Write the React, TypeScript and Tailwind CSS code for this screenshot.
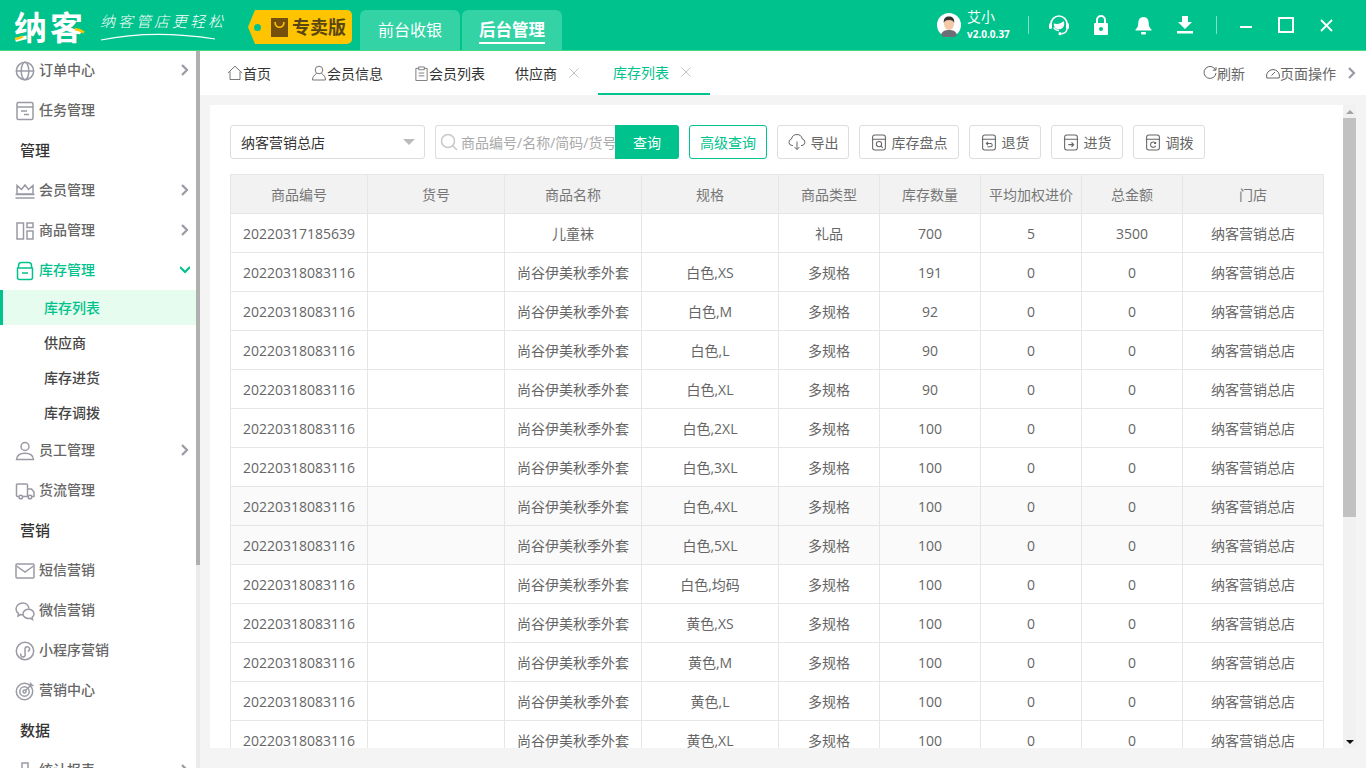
import type { ReactNode } from 'react';

type IconProps = { children: ReactNode; className?: string; size?: number; box?: number };

function Icon({ children, className = '', size = 20, box = 20 }: IconProps) {
  return (
    <svg
      width={size}
      height={size}
      viewBox={`0 0 ${box} ${box}`}
      fill="none"
      stroke="currentColor"
      strokeWidth={1.5}
      className={`shrink-0 ${className}`}
    >
      {children}
    </svg>
  );
}

function Chevron({ down }: { down?: boolean }) {
  return (
    <svg width="10" height="12" viewBox="0 0 10 12" fill="none" stroke="currentColor" strokeWidth={2.2} className="shrink-0">
      {down ? <path d="M0 3l5 5 5-5" /> : <path d="M2 1l5 5-5 5" />}
    </svg>
  );
}

const sideIcons: Record<string, ReactNode> = {
  globe: (
    <>
      <circle cx="10" cy="10" r="8.7" />
      <ellipse cx="10" cy="10" rx="3.8" ry="8.7" />
      <path d="M1.5 10h17" />
    </>
  ),
  task: (
    <>
      <rect x="2" y="1.5" width="16" height="17" rx="1.5" />
      <path d="M2 6h16M6 10h6M9 13.5h5" />
    </>
  ),
  crown: (
    <>
      <path d="M2 13V4.5l4.5 4 3.5-4.5 3.5 4.5 4.5-4V13z" />
      <path d="M0.5 13.5h19M0.5 17h19" />
    </>
  ),
  goods: (
    <>
      <rect x="2" y="2" width="6.5" height="16" />
      <rect x="12" y="2" width="6" height="4.5" />
      <rect x="12" y="10" width="6" height="8" />
    </>
  ),
  stock: (
    <>
      <path d="M3.5 7V4.5a3 3 0 0 1 3-3h7a3 3 0 0 1 3 3V7" />
      <path d="M2 7h16" />
      <path d="M2.5 7v9.5a2 2 0 0 0 2 2h11a2 2 0 0 0 2-2V7" />
      <path d="M7 12h6" />
    </>
  ),
  staff: (
    <>
      <circle cx="10" cy="5.5" r="4" />
      <path d="M1.5 18.5c.3-4.5 3.5-6.3 8.5-6.3s8.200 1.800 8.500 6.300z" />
    </>
  ),
  truck: (
    <>
      <path d="M4 15.500H2.500a1 1 0 0 1-1-1V4a1 1 0 0 1 1-1h9a1 1 0 0 1 1 1v11.500H8" />
      <path d="M12.500 8h4l2.500 3v4.500h-2M12.500 15.500H13" />
      <circle cx="5.800" cy="16" r="1.800" />
      <circle cx="15" cy="16" r="1.800" />
    </>
  ),
  mail: (
    <>
      <rect x="1" y="3" width="18" height="14" rx="1" />
      <path d="M1.500 5l8.500 6 8.500-6" />
    </>
  ),
  wechat: (
    <>
      <path d="M8 2C4 2 1 4.700 1 8c0 1.900 1 3.500 2.500 4.600L3 15l2.600-1.400c.8.200 1.500.300 2.300.300" />
      <path d="M13.500 8.300c-3 0-5.500 2-5.500 4.600s2.500 4.600 5.500 4.600c.7 0 1.300-.1 1.900-.3l2.100 1.300-.4-2.200c1.100-.9 1.900-2 1.900-3.400 0-2.600-2.500-4.600-5.500-4.600z" />
      <path d="M14 7.500C13.500 4.500 11 2 8 2" />
    </>
  ),
  mini: (
    <>
      <circle cx="10" cy="10" r="8.700" />
      <path d="M6 12.500a2.300 2.300 0 1 0 4 0V8a2.300 2.300 0 1 1 2.800 2.200" />
    </>
  ),
  target: (
    <>
      <circle cx="9.500" cy="10.500" r="8.200" />
      <circle cx="9.500" cy="10.500" r="4.700" />
      <circle cx="9.500" cy="10.500" r="1.500" />
      <path d="M10 10L17 3M15.500 1.500V4.500H18.500" />
    </>
  ),
  chart: (
    <>
      <path d="M2 18V9h5V2h6v16z" />
    </>
  ),
};

type MenuItem =
  | { kind: 'item'; label: string; icon: string; arrow?: boolean; open?: boolean }
  | { kind: 'section'; label: string }
  | { kind: 'sub'; label: string; active?: boolean };

const menu: MenuItem[] = [
  { kind: 'item', label: '订单中心', icon: 'globe', arrow: true },
  { kind: 'item', label: '任务管理', icon: 'task' },
  { kind: 'section', label: '管理' },
  { kind: 'item', label: '会员管理', icon: 'crown', arrow: true },
  { kind: 'item', label: '商品管理', icon: 'goods', arrow: true },
  { kind: 'item', label: '库存管理', icon: 'stock', open: true },
  { kind: 'sub', label: '库存列表', active: true },
  { kind: 'sub', label: '供应商' },
  { kind: 'sub', label: '库存进货' },
  { kind: 'sub', label: '库存调拨' },
  { kind: 'item', label: '员工管理', icon: 'staff', arrow: true },
  { kind: 'item', label: '货流管理', icon: 'truck' },
  { kind: 'section', label: '营销' },
  { kind: 'item', label: '短信营销', icon: 'mail' },
  { kind: 'item', label: '微信营销', icon: 'wechat' },
  { kind: 'item', label: '小程序营销', icon: 'mini' },
  { kind: 'item', label: '营销中心', icon: 'target' },
  { kind: 'section', label: '数据' },
  { kind: 'item', label: '统计报表', icon: 'chart', arrow: true },
];

function Sidebar() {
  return (
    <aside className="flex w-[200px] shrink-0 overflow-hidden">
      <nav className="-mt-px w-[196px] bg-white">
        {menu.map((m) => {
          if (m.kind === 'section') {
            return (
              <div key={m.label} className="flex h-[40px] items-center pl-[20px] text-[15px] font-medium text-[#333]">
                {m.label}
              </div>
            );
          }
          if (m.kind === 'sub') {
            return (
              <div
                key={m.label}
                className={
                  m.active
                    ? 'flex h-[35px] items-center border-l-[3px] border-[#00c28c] bg-[#e5fcee] pl-[41px] text-[14px] font-medium text-[#00c28c]'
                    : 'flex h-[35px] items-center pl-[44px] text-[14px] font-medium text-[#444]'
                }
              >
                {m.label}
              </div>
            );
          }
          return (
            <div key={m.label} className={`flex h-[40px] items-center pl-[15px] pr-[6px] ${m.open ? 'text-[#00c28c]' : 'text-[#9a9aa6]'}`}>
              <Icon className="mt-[2px]">{sideIcons[m.icon]}</Icon>
              <span className={`ml-[4px] flex-1 pb-[2px] text-[14px] font-medium ${m.open ? 'text-[#00c28c]' : 'text-[#666]'}`}>{m.label}</span>
              {m.arrow && <Chevron />}
              {m.open && <Chevron down />}
            </div>
          );
        })}
      </nav>
      <div className="w-[4px] bg-[#ebebeb]">
        <div className="h-[514px] bg-[#b0b0b0]" />
      </div>
    </aside>
  );
}

function Header() {
  return (
    <header className="flex h-[51px] shrink-0 items-stretch border-b border-[#45d97f] bg-[#00c28c] text-white">
      <div className="relative ml-[14px] flex w-[72px] items-center whitespace-nowrap pt-[4px] text-[33px] font-bold leading-none tracking-[3px]">
        纳客
        <svg width="72" height="30" viewBox="0 0 72 30" className="absolute left-0 top-[13px]" fill="none" stroke="#ffc400" strokeWidth={2.500}>
          <path d="M1 26c3 0 5-1 8-2.500M61 16c3 .5 6 1.500 9 3.500" />
        </svg>
      </div>
      <div className="ml-[14px] flex w-[128px] flex-col pt-[11px]">
        <span className="whitespace-nowrap text-[15px] font-light italic leading-[20px] tracking-[3px]">纳客管店更轻松</span>
        <svg width="116" height="8" viewBox="0 0 116 8" className="mt-[2px]" fill="none" stroke="#fff" strokeWidth={1.2}>
          <path d="M1 7C30 1 70-1 115 6" />
        </svg>
      </div>
      <div className="relative ml-[20px] mt-[10px] flex h-[34px] w-[104px] items-center rounded-r-[5px] bg-[#ffc400] pl-[23px] [clip-path:polygon(0_50%,7px_0,100%_0,100%_100%,7px_100%)]">
        <span className="absolute left-[6px] top-[14px] size-[7px] rounded-full bg-[#00c28c]" />
        <svg width="17" height="19" viewBox="0 0 17 19" className="shrink-0">
          <rect width="17" height="19" fill="#74500c" />
          <path d="M4 4c0 7 9 7 9 0" fill="none" stroke="#ffc400" strokeWidth={1.600} />
        </svg>
        <span className="ml-[4px] whitespace-nowrap text-[18px] font-bold leading-none text-[#5a4612]">专卖版</span>
      </div>
      <div className="ml-[8px] mt-[10px] flex h-[40px] w-[100px] items-center justify-center rounded-t-[6px] bg-[#33d3a6] text-[16px]">前台收银</div>
      <div className="relative ml-[2px] mt-[10px] flex h-[40px] w-[100px] items-center justify-center rounded-t-[6px] bg-[#33d3a6] text-[16.500px] font-bold">
        后台管理
        <span className="absolute bottom-[6px] left-[17px] h-[2px] w-[66px] bg-white" />
      </div>

      <div className="ml-[375px] flex items-center">
        <svg width="24" height="24" viewBox="0 0 24 24" className="shrink-0">
          <circle cx="12" cy="12" r="12" fill="#fff" />
          <path d="M4 22c1-4 4-5 8-5s7 1 8 5a12 12 0 0 1-16 0z" fill="#6d6d75" />
          <ellipse cx="12" cy="11" rx="5" ry="6" fill="#f4c9a8" />
          <path d="M6.800 10c-.5-5 2-6.500 5.200-6.500s5.700 1.500 5.200 6.500c-.8-2-2-3-5.200-3s-4.400 1-5.200 3z" fill="#333" />
        </svg>
        <div className="ml-[6px] w-[61px] leading-none">
          <div className="text-[14px] leading-[16px]">艾小</div>
          <div className="mt-[3px] text-[10px] font-bold leading-[13px]">v2.0.0.37</div>
        </div>
        <span className="h-[18px] w-px bg-white/50" />
      </div>
      <div className="flex items-center">
        <svg width="22" height="22" viewBox="0 0 22 22" className="ml-[19px]" fill="none" stroke="#fff" strokeWidth={1.600}>
          <path d="M3 10a8 8 0 0 1 16 0" />
          <rect x="1" y="9" width="3" height="6" rx="1.500" fill="#fff" stroke="none" />
          <rect x="18" y="9" width="3" height="6" rx="1.500" fill="#fff" stroke="none" />
          <path d="M6 9.500c3 1 7 .5 9.500-2.500.5 1 .8 2 .8 3a5.300 5.300 0 0 1-10.600 0z" fill="#fff" stroke="none" />
          <path d="M5.800 13.500c1 2 3 3 5.200 3" />
          <path d="M19 14.500c0 3-2.500 5-5.500 5.200" />
          <circle cx="12" cy="19.700" r="1.600" fill="#fff" stroke="none" />
        </svg>
        <svg width="16" height="20" viewBox="0 0 16 20" className="ml-[23px]">
          <path d="M4 9V5a4 4 0 0 1 8 0v4" fill="none" stroke="#fff" strokeWidth={2} />
          <path d="M1 9a1 1 0 0 1 1-1h12a1 1 0 0 1 1 1v10a1 1 0 0 1-1 1H2a1 1 0 0 1-1-1z" fill="#fff" />
          <circle cx="8" cy="14" r="2" fill="#00c28c" />
        </svg>
        <svg width="17" height="19" viewBox="0 0 17 19" className="ml-[26px]" fill="#fff">
          <path d="M8.500 1c3.500 0 5.200 2.800 5.200 6 0 3 .8 5 2.800 6.500v1H.5v-1C2.500 12 3.300 10 3.300 7c0-3.200 1.700-6 5.200-6z" />
          <rect x="6" y="16" width="5" height="2.500" rx="1" />
        </svg>
        <svg width="16" height="18" viewBox="0 0 16 18" className="ml-[25px]" fill="#fff">
          <path d="M5 0h6v6h4l-7 7-7-7h4z" />
          <rect y="15" width="16" height="2.500" />
        </svg>
        <span className="ml-[23px] h-[18px] w-px bg-white/50" />
        <span className="ml-[23px] mt-[4px] h-[2px] w-[12px] bg-white" />
        <span className="ml-[26px] size-[16px] border-2 border-white" />
        <svg width="13" height="13" viewBox="0 0 13 13" className="ml-[26px]" fill="none" stroke="#fff" strokeWidth={1.800}>
          <path d="M1 1l11 11M12 1L1 12" />
        </svg>
      </div>
    </header>
  );
}

function Close() {
  return (
    <svg width="12" height="12" viewBox="0 0 12 12" fill="none" stroke="#c4c4c4" strokeWidth={1} className="ml-[11px]">
      <path d="M1.500 1.500l9 9M10.500 1.500l-9 9" />
    </svg>
  );
}

function TabBar() {
  return (
    <div className="flex h-[44px] shrink-0 items-stretch bg-white pl-[12px] text-[14px] text-[#333]">
      <div className="flex items-center px-[15px]">
        <Icon size={16} box={16} className="text-[#777]">
          <path d="M.8 8L8 1.200 15.200 8M3 6.500V14.500H13V6.500" strokeWidth={1} />
        </Icon>
        首页
      </div>
      <div className="ml-[10px] flex items-center px-[15px]">
        <Icon size={16} box={16} className="text-[#777]">
          <circle cx="8" cy="5" r="3.800" strokeWidth={1} />
          <path d="M5.500 8.500C3 10 1.500 12 1.500 15h13c0-3-1.500-5-4-6.500" strokeWidth={1} />
        </Icon>
        会员信息
      </div>
      <div className="ml-[1px] flex items-center px-[15px]">
        <Icon size={15} box={16} className="text-[#777]">
          <path d="M2 2.500h3M11 2.500h3V15.500H2V2.500M5 1h6v3H5zM5 7.500h6M5 10.500h6" strokeWidth={1} />
        </Icon>
        会员列表
      </div>
      <div className="flex items-center px-[15px]">
        供应商
        <Close />
      </div>
      <div className="ml-[3px] flex items-center border-b-2 border-[#00c28c] pl-[15px] pr-[18px] text-[#00c28c]">
        库存列表
        <Close />
      </div>
      <div className="ml-auto flex items-center pr-[9px] text-[#666]">
        <Icon size={14} box={14}>
          <path d="M12.500 4A6 6 0 1 0 13 7M13 1v3.200H9.800" strokeWidth={1} />
        </Icon>
        刷新
        <svg width="14" height="14" viewBox="0 0 14 14" fill="none" stroke="currentColor" className="ml-[21px]">
          <path d="M.8 12A6.500 6.500 0 1 1 13.200 12zM5.500 9.500L9 6" strokeWidth={1} />
        </svg>
        页面操作
        <span className="ml-[11px] text-[#9a9aa6]">
          <Chevron />
        </span>
      </div>
    </div>
  );
}

function BoxIcon({ children }: { children?: ReactNode }) {
  return (
    <svg width="16" height="17" viewBox="0 0 15 16" fill="none" stroke="#666" strokeWidth={1} className="shrink-0">
      <path d="M1.500 5V3a2 2 0 0 1 2-2h8a2 2 0 0 1 2 2v2M.8 5h13.400M1.500 5v8a2 2 0 0 0 2 2h8a2 2 0 0 0 2-2V5" />
      {children}
    </svg>
  );
}

function ToolButton({ icon, label, width }: { icon: ReactNode; label: string; width: string }) {
  return (
    <div className={`ml-[10px] flex h-[34px] items-center justify-center gap-[5px] rounded-[3px] border border-[#ddd] bg-white text-[14px] text-[#666] ${width}`}>
      {icon}
      {label}
    </div>
  );
}

function Toolbar() {
  return (
    <div className="flex h-[34px] items-center">
      <div className="flex h-[34px] w-[195px] items-center justify-between rounded-[3px] border border-[#ddd] pl-[10px] pr-[9px] text-[14px] text-[#333]">
        纳客营销总店
        <span className="h-0 w-0 border-x-[6px] border-t-[6px] border-x-transparent border-t-[#bbb]" />
      </div>
      <div className="ml-[10px] flex h-[34px] w-[180px] items-center overflow-hidden rounded-l-[3px] border border-r-0 border-[#ddd] pl-[4px]">
        <svg width="18" height="18" viewBox="0 0 18 18" fill="none" stroke="#c8c8c8" strokeWidth={1.500} className="shrink-0">
          <circle cx="8" cy="8" r="6.500" />
          <path d="M12.500 12.500L17 17" />
        </svg>
        <span className="ml-[3px] whitespace-nowrap text-[14px] text-[#aaa]">商品编号/名称/简码/货号</span>
      </div>
      <div className="flex h-[34px] w-[64px] items-center justify-center rounded-r-[3px] bg-[#00c28c] text-[14px] text-white">查询</div>
      <div className="ml-[10px] flex h-[34px] w-[78px] items-center justify-center rounded-[3px] border border-[#00c28c] text-[14px] text-[#00c28c]">高级查询</div>
      <ToolButton
        width="w-[72px]"
        label="导出"
        icon={
          <svg width="18" height="16" viewBox="0 0 18 16" fill="none" stroke="#666" strokeWidth={1} className="shrink-0">
            <path d="M5 11.500H4a3.300 3.300 0 0 1-.5-6.500 5.500 5.500 0 0 1 10.800 0 3.300 3.300 0 0 1-.3 6.500h-1M9 7.500v8M6.500 13L9 15.500 11.500 13" />
          </svg>
        }
      />
      <ToolButton
        width="w-[100px]"
        label="库存盘点"
        icon={
          <BoxIcon>
            <circle cx="7.500" cy="9.500" r="2.500" />
            <path d="M9.500 11.500l1.500 1.500" />
          </BoxIcon>
        }
      />
      <ToolButton
        width="w-[72px]"
        label="退货"
        icon={
          <BoxIcon>
            <path d="M5 9h4a1.500 1.500 0 0 1 0 3H6M6.500 7.500L5 9l1.500 1.500" />
          </BoxIcon>
        }
      />
      <ToolButton
        width="w-[72px]"
        label="进货"
        icon={
          <BoxIcon>
            <path d="M5 10h5M8 8l2 2-2 2" />
          </BoxIcon>
        }
      />
      <ToolButton
        width="w-[72px]"
        label="调拨"
        icon={
          <BoxIcon>
            <path d="M10 9a2.500 2.500 0 1 0 0 2M10 7.500V9H8.500" />
          </BoxIcon>
        }
      />
    </div>
  );
}

const columns = ['商品编号', '货号', '商品名称', '规格', '商品类型', '库存数量', '平均加权进价', '总金额', '门店'];
const widths = ['w-[137px]', 'w-[137px]', 'w-[137px]', 'w-[137px]', 'w-[101px]', 'w-[101px]', 'w-[101px]', 'w-[101px]', 'w-[141px]'];

type Row = { code: string; name: string; spec: string; type: string; qty: number; price: number; total: number };

const specs: [string, number][] = [
  ['白色,XS', 191],
  ['白色,M', 92],
  ['白色,L', 90],
  ['白色,XL', 90],
  ['白色,2XL', 100],
  ['白色,3XL', 100],
  ['白色,4XL', 100],
  ['白色,5XL', 100],
  ['白色,均码', 100],
  ['黄色,XS', 100],
  ['黄色,M', 100],
  ['黄色,L', 100],
  ['黄色,XL', 100],
];

const rows: Row[] = [
  { code: '20220317185639', name: '儿童袜', spec: '', type: '礼品', qty: 700, price: 5, total: 3500 },
  ...specs.map(([spec, qty]) => ({ code: '20220318083116', name: '尚谷伊美秋季外套', spec, type: '多规格', qty, price: 0, total: 0 })),
];

function StockTable() {
  const cell = 'h-[39px] border border-[#e6e6e6] p-0 text-center';
  return (
    <table className="mt-[15px] w-[1093px] table-fixed border-collapse text-[14px] text-[#666]">
      <colgroup>
        {widths.map((w, i) => (
          <col key={i} className={w} />
        ))}
      </colgroup>
      <thead>
        <tr className="bg-[#f2f2f2]">
          {columns.map((c) => (
            <th key={c} className={`${cell} font-normal text-[#777]`}>
              {c}
            </th>
          ))}
        </tr>
      </thead>
      <tbody>
        {rows.map((r, i) => (
          <tr key={i} className={i === 7 || i === 8 ? 'bg-[#fafafa]' : 'bg-white'}>
            <td className={`${cell} !text-left pl-[12px]`}>{r.code}</td>
            <td className={cell} />
            <td className={cell}>{r.name}</td>
            <td className={cell}>{r.spec}</td>
            <td className={cell}>{r.type}</td>
            <td className={cell}>{r.qty}</td>
            <td className={cell}>{r.price}</td>
            <td className={cell}>{r.total}</td>
            <td className={cell}>纳客营销总店</td>
          </tr>
        ))}
      </tbody>
    </table>
  );
}

function PageScrollbar() {
  return (
    <div className="flex w-[13px] shrink-0 flex-col bg-[#f1f1f1]">
      <div className="flex h-[13px] items-center justify-center">
        <span className="h-0 w-0 border-x-[4px] border-b-[4px] border-x-transparent border-b-[#a3a3a3]" />
      </div>
      <div className="h-[399px] bg-[#c1c1c1]" />
      <div className="mt-auto flex h-[13px] items-center justify-center">
        <span className="h-0 w-0 border-x-[4px] border-t-[4px] border-x-transparent border-t-[#111]" />
      </div>
    </div>
  );
}

export default function App() {
  return (
    <div className="flex h-[768px] w-[1366px] flex-col overflow-hidden bg-[#f4f4f4] font-['Open_Sans','Noto_Sans_CJK_SC',sans-serif]">
      <Header />
      <div className="flex min-h-0 flex-1">
        <Sidebar />
        <main className="flex min-w-0 flex-1 flex-col">
          <TabBar />
          <div className="min-h-0 flex-1 pb-[20px] pl-[10px] pr-[10px] pt-[10px]">
            <div className="flex h-full overflow-hidden bg-white">
              <div className="min-w-0 flex-1 overflow-hidden pl-[20px] pt-[20px]">
                <Toolbar />
                <StockTable />
              </div>
              <PageScrollbar />
            </div>
          </div>
        </main>
      </div>
    </div>
  );
}
